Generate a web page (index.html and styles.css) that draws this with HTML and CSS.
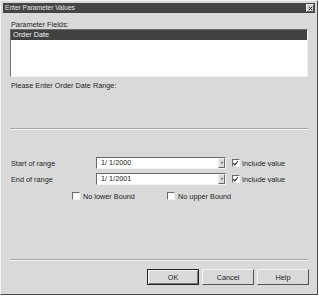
FILE: index.html
```html
<!DOCTYPE html>
<html lang="en">
<head>
    <meta charset="utf-8">
    <title>Enter Parameter Values</title>
    <link rel="stylesheet" href="styles.css">
</head>
<body>
    <div class="window">
        <div class="titlebar">
            <span class="title">Enter Parameter Values</span>
            <span class="close">
                <svg width="6" height="6" viewBox="0 0 6 6"><path d="M1 1L5 5M5 1L1 5" stroke="#333" stroke-width="1.2"/></svg>
            </span>
        </div>
        <div class="content">
            <div class="label fields-label">Parameter Fields:</div>
            <div class="listbox">
                <div class="item selected">Order Date</div>
            </div>
            <div class="label range-label">Please Enter Order Date Range:</div>
            <div class="sep sep-top"></div>

            <div class="range-row first">
                <span class="row-label">Start of range</span>
                <div class="combo">
                    <span class="value">1/ 1/2000</span>
                    <span class="drop"><span class="arrow"></span></span>
                </div>
                <span class="check"><span class="box checked"></span>Include value</span>
            </div>
            <div class="range-row">
                <span class="row-label">End of range</span>
                <div class="combo">
                    <span class="value">1/ 1/2001</span>
                    <span class="drop"><span class="arrow"></span></span>
                </div>
                <span class="check"><span class="box checked"></span>Include value</span>
            </div>

            <div class="bounds">
                <span class="check lower"><span class="box"></span>No lower Bound</span>
                <span class="check"><span class="box"></span>No upper Bound</span>
            </div>

            <div class="sep sep-bottom"></div>

            <div class="buttons">
                <button class="btn default">OK</button>
                <button class="btn">Cancel</button>
                <button class="btn">Help</button>
            </div>
        </div>
    </div>
</body>
</html>
```

FILE: styles.css
```css
body {
    margin: 0;
    background: #ffffff;
    font-family: "Liberation Sans", Arial, sans-serif;
    font-size: 7.3px;
    color: #1e1e1e;
}

.window {
    box-sizing: border-box;
    width: 318px;
    height: 295px;
    padding: 2px;
    background: #d9d9d9;
    border: 1px solid;
    border-color: #f2f2f2 #4a4a4a #4a4a4a #f2f2f2;
}

.titlebar {
    height: 10px;
    background: #454545;
    color: #e6e6e6;
    display: flex;
    align-items: center;
    justify-content: space-between;
    padding: 0 1px 0 2px;
}

.title {
    font-size: 6.6px;
    line-height: 10px;
}

.close {
    width: 8px;
    height: 8px;
    box-sizing: border-box;
    background: #cfcfcf;
    border: 1px solid;
    border-color: #f4f4f4 #5a5a5a #5a5a5a #f4f4f4;
    display: flex;
    align-items: center;
    justify-content: center;
}

.close svg {
    width: 5px;
    height: 5px;
}

.content {
    padding: 0 7px;
}

.label {
    height: 9px;
    line-height: 9px;
    padding-left: 1px;
}

.fields-label {
    margin-top: 7px;
}

.listbox {
    box-sizing: border-box;
    height: 48px;
    background: #ffffff;
    border: 1px solid;
    border-color: #6e6e6e #efefef #efefef #6e6e6e;
}

.item {
    height: 10px;
    line-height: 10px;
    padding-left: 2px;
}

.item.selected {
    background: #414141;
    color: #f2f2f2;
}

.range-label {
    margin-top: 4px;
}

.sep {
    height: 1px;
    background: #a6a6a6;
    border-bottom: 1px solid #f4f4f4;
}

.sep-top {
    margin-top: 38px;
}

.range-row {
    display: flex;
    align-items: center;
    height: 12px;
    margin-top: 4px;
}

.range-row.first {
    margin-top: 27px;
}

.row-label {
    width: 85px;
    padding-left: 1px;
}

.combo {
    box-sizing: border-box;
    width: 130px;
    height: 12px;
    background: #ffffff;
    border: 1px solid;
    border-color: #6a6a6a #f2f2f2 #f2f2f2 #6a6a6a;
    display: flex;
    align-items: center;
    justify-content: space-between;
}

.value {
    padding-left: 4px;
    line-height: 10px;
}

.drop {
    box-sizing: border-box;
    width: 7px;
    height: 10px;
    background: #dcdcdc;
    border: 1px solid;
    border-color: #f4f4f4 #6a6a6a #6a6a6a #f4f4f4;
    display: flex;
    align-items: center;
    justify-content: center;
}

.arrow {
    width: 0;
    height: 0;
    border-left: 1.5px solid transparent;
    border-right: 1.5px solid transparent;
    border-top: 2px solid #333;
}

.check {
    display: flex;
    align-items: center;
    margin-left: 6px;
}

.box {
    box-sizing: border-box;
    width: 8px;
    height: 8px;
    margin-right: 2px;
    background: #ffffff;
    border: 1px solid;
    border-color: #6a6a6a #f2f2f2 #f2f2f2 #6a6a6a;
    position: relative;
}

.box.checked::after {
    content: "";
    position: absolute;
    left: 1px;
    top: 0;
    width: 2px;
    height: 4px;
    border: solid #222;
    border-width: 0 1.5px 1.5px 0;
    transform: rotate(40deg);
}

.bounds {
    display: flex;
    align-items: center;
    height: 10px;
    margin-top: 6px;
    padding-left: 62px;
}

.bounds .check {
    margin-left: 0;
}

.bounds .box {
    margin-right: 3px;
}

.bounds .lower {
    width: 95px;
}

.sep-bottom {
    margin-top: 58px;
}

.buttons {
    display: flex;
    justify-content: flex-end;
    gap: 3px;
    margin-top: 8px;
    margin-right: -1px;
}

.btn {
    box-sizing: border-box;
    width: 52px;
    height: 16px;
    padding: 0;
    font-family: "Liberation Sans", Arial, sans-serif;
    font-size: 7.3px;
    color: #1e1e1e;
    background: #d9d9d9;
    border: 1px solid;
    border-color: #f4f4f4 #555555 #555555 #f4f4f4;
}

.btn.default {
    border: 1px solid #222222;
    box-shadow: inset 1px 1px 0 #f4f4f4, inset -1px -1px 0 #777777;
}
```
